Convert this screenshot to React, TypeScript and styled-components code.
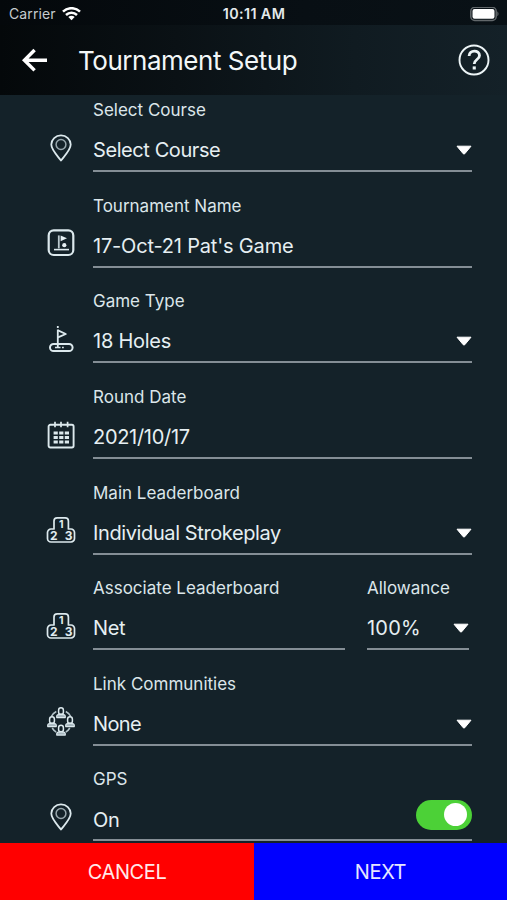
import React from "react";
import styled, { createGlobalStyle } from "styled-components";

const GlobalStyle = createGlobalStyle`
  * { box-sizing: border-box; }
  body { margin: 0; background: #142229; }
  button { border: 0; padding: 0; background: none; color: inherit; font: inherit; }
`;

const Screen = styled.div`
  display: flex;
  flex-direction: column;
  width: 507px;
  height: 900px;
  overflow: hidden;
  background: #142229;
  color: #eaf1f3;
  font-family: Inter, "Liberation Sans", sans-serif;
`;

const StatusBar = styled.div`
  display: grid;
  grid-template-columns: 1fr auto 1fr;
  align-items: center;
  flex: none;
  height: 25px;
  padding: 3px 8px 0 9px;
  background: linear-gradient(90deg, #04080b, #080f14 60%, #091116);
  font-size: 14px;
  line-height: 22px;
`;

const Carrier = styled.div`
  display: flex;
  align-items: center;
  gap: 6px;
  color: #c6cccf;
  letter-spacing: 0.1px;
`;

const Clock = styled.div`
  font-weight: 600;
  font-size: 14.3px;
  letter-spacing: 0.4px;
  color: #e4e9eb;
`;

const BatterySlot = styled.div`
  display: flex;
  justify-content: flex-end;
`;

const Header = styled.header`
  display: flex;
  align-items: center;
  flex: none;
  height: 70px;
  padding: 0 17px 0 20px;
  background: linear-gradient(90deg, #04080a, #0a1115 35%, #101b21 70%, #142128);
`;

const Title = styled.h1`
  flex: 1;
  margin: 2px 0 0 28px;
  font-size: 26px;
  font-weight: 400;
  line-height: 34px;
  letter-spacing: -0.47px;
  color: #f3f7f8;
`;

const IconButton = styled.button`
  display: flex;
`;

const Form = styled.main`
  flex: 1;
  min-height: 0;
  overflow: hidden;
  padding: 3px 35px 0 93px;
`;

const Row = styled.div`
  display: flex;
  gap: 22px;
  height: 95.65px;
  padding-right: ${(p: { $inset?: number }) => p.$inset ?? 0}px;
`;

const Field = styled.div<{ $width?: number }>`
  flex: ${(p) => (p.$width ? `none` : 1)};
  width: ${(p) => (p.$width ? `${p.$width}px` : "auto")};
`;

const Label = styled.div`
  height: 24px;
  font-size: 17px;
  line-height: 24px;
  color: #dce6ea;
  white-space: nowrap;
`;

const Value = styled.div<{ $icon?: boolean }>`
  display: flex;
  align-items: center;
  height: 49px;
  margin-left: ${(p) => (p.$icon ? "-46px" : "0")};
  padding-top: 7.4px;
`;

const IconCell = styled.span`
  display: flex;
  width: 28px;
  margin: -5px 18px 0 0;
`;

const Text = styled.span<{ $spacing: number }>`
  flex: 1;
  font-size: 20px;
  line-height: 28px;
  letter-spacing: ${(p) => p.$spacing}px;
  white-space: nowrap;
  color: #e6eff2;
`;

const Underline = styled.div`
  height: 2px;
  margin-top: -1px;
  background: #848e95;
`;

const Toggle = styled.span`
  display: flex;
  justify-content: flex-end;
  align-items: center;
  width: 56px;
  height: 30px;
  margin-top: -10px;
  padding: 0 5px;
  border-radius: 15px;
  background: #4cd137;
`;

const Knob = styled.span`
  width: 23px;
  height: 23px;
  border-radius: 50%;
  background: #fff;
`;

const Footer = styled.footer`
  display: grid;
  grid-template-columns: 254px 253px;
  flex: none;
  height: 57px;
`;

const Action = styled.button<{ $color: string; $ink: string }>`
  background: ${(p) => p.$color};
  color: ${(p) => p.$ink};
  font-size: 20px;
  letter-spacing: -0.4px;
`;

type IconName = "pin" | "flag" | "hole" | "calendar" | "podium" | "people";

const Person = ({ x, y }: { x: number; y: number }) => (
  <g transform={`translate(${x} ${y})`} fill="none" stroke="#dce9ed">
    <path d="M-2.4-.8v-2a2.4 2.4 0 0 1 4.8 0v2c0 1.2-1 2.1-2.4 2.1S-2.4.4-2.4-.8z" strokeWidth="1.5" />
    <path d="M-4.3 4.6V3.2c0-1.4 2.1-1.8 4.3-1.8s4.3.4 4.3 1.8v1.4z" fill="#a7b7be" strokeWidth="1.1" />
  </g>
);

const icons: Record<IconName, React.ReactNode> = {
  pin: (
    <>
      <path d="M14 26.5C11 22.5 4.3 16 4.3 10.6a9.7 9.2 0 0 1 19.4 0C23.7 16 17 22.5 14 26.5z" strokeWidth="1.8" />
      <circle cx="14" cy="10.5" r="4.9" stroke="#98a7ad" strokeWidth="1.5" />
    </>
  ),
  flag: (
    <>
      <rect x="1.7" y="1.4" width="24.6" height="24.6" rx="5" strokeWidth="2.2" />
      <path d="M11.8 6.4v13" strokeWidth="1.8" stroke="#bac9ce" />
      <path d="M13.6 6.4l6.4 2.8-6.4 3z" fill="#e6f0f3" stroke="none" />
      <circle cx="17.3" cy="16.2" r="2.1" fill="#e6f0f3" stroke="none" />
      <path d="M7 20.6h15" strokeWidth="1.6" />
    </>
  ),
  hole: (
    <>
      <rect x="3" y="18.9" width="22.6" height="7.2" rx="3.6" strokeWidth="2" />
      <path d="M10.8 1v2M10.8 4.6v17.6" strokeWidth="1.8" />
      <path d="M11 5.4l7.8 3.6-7.8 3.4" strokeWidth="1.8" />
      <path d="M8 22.5h5.5M15 22.5h1.8" strokeWidth="1.7" />
    </>
  ),
  calendar: (
    <>
      <rect x="1.6" y="3.8" width="25" height="22.7" rx="1.7" strokeWidth="1.9" />
      <path d="M8 .8v5.5M14 .8v5.5M20.6 .8v5.5" strokeWidth="1.7" />
      <path d="M6.6 12h15.6M6.6 16.5h15.6M6.6 21h15.6" strokeWidth="3" strokeDasharray="4.2 1.4" />
    </>
  ),
  podium: (
    <>
      <path d="M7 13V5a3.2 3.2 0 0 1 3.2-3.2h8A3.2 3.2 0 0 1 21.4 5v8H24a3.5 3.5 0 0 1 3.5 3.5v6A3.5 3.5 0 0 1 24 26H4a3.5 3.5 0 0 1-3.5-3.5v-6A3.5 3.5 0 0 1 4 13z" strokeWidth="1.7" />
      <g fill="#e1ecef" stroke="none" fontFamily="Inter, sans-serif" fontWeight="700" fontSize="10.5" textAnchor="middle">
        <text x="14.2" y="12">1</text>
        <text x="6.8" y="24" fontSize="12">2</text>
        <text x="21.6" y="24" fontSize="12">3</text>
      </g>
    </>
  ),
  people: (
    <>
      <path d="M9.3 3.5a11.5 11.5 0 0 0-5 5M18.8 3.5a11.5 11.5 0 0 1 5 5M5.2 20a11 11 0 0 0 4 4M22.8 20a11 11 0 0 1-4 4" stroke="#b4c4ca" strokeWidth="1.5" />
      <Person x={14} y={5} />
      <Person x={5} y={14} />
      <Person x={23} y={14} />
      <Person x={14} y={22.5} />
    </>
  ),
};

const RowIcon = ({ name }: { name: IconName }) => (
  <IconCell>
    <svg width="28" height="28" viewBox="0 0 28 28" fill="none" stroke="#dce9ed" strokeLinejoin="round" overflow="visible">
      {icons[name]}
    </svg>
  </IconCell>
);

const Caret = () => (
  <svg width="16" height="10" viewBox="0 0 16 10">
    <path d="M1 1.2h14L8.8 8.7q-.8.8-1.6 0z" fill="#fff" stroke="#fff" strokeLinejoin="round" />
  </svg>
);

interface EntryProps {
  label: string;
  value: string;
  icon?: IconName;
  caret?: boolean;
  toggle?: boolean;
  width?: number;
  spacing?: number;
}

const Entry = ({ label, value, icon, caret, toggle, width, spacing = -0.4 }: EntryProps) => (
  <Field $width={width}>
    <Label>{label}</Label>
    <Value $icon={!!icon}>
      {icon && <RowIcon name={icon} />}
      <Text $spacing={spacing}>{value}</Text>
      {caret && <Caret />}
      {toggle && (
        <Toggle role="switch" aria-checked="true">
          <Knob />
        </Toggle>
      )}
    </Value>
    <Underline />
  </Field>
);

export default function App() {
  return (
    <Screen>
      <GlobalStyle />
      <StatusBar>
        <Carrier>
          Carrier
          <svg width="19" height="14" viewBox="0 0 19 14" fill="none" stroke="#fff" strokeWidth="2.5">
            <path d="M1 4.7C5.7 0 13.3 0 18 4.7M4 8c3.1-3 7.9-3 11 0" />
            <path d="M9.5 13.2L6.3 10c1.8-1.7 4.6-1.7 6.4 0z" fill="#fff" stroke="none" />
          </svg>
        </Carrier>
        <Clock>10:11 AM</Clock>
        <BatterySlot>
          <svg width="29" height="15" viewBox="0 0 29 15">
            <rect x=".8" y=".3" width="25.4" height="13.2" rx="4" fill="none" stroke="#62686b" strokeWidth="1.5" />
            <rect x="2.5" y="2" width="22" height="9.8" rx="2" fill="#fff" />
            <path d="M27.3 4.6c1.6.7 1.6 4 0 4.7z" fill="#62686b" />
          </svg>
        </BatterySlot>
      </StatusBar>
      <Header>
        <IconButton aria-label="Back">
          <svg width="30" height="28" viewBox="0 0 30 28" fill="none" stroke="#fff" strokeWidth="3.4">
            <path d="M27 14.2H4.2M14.6 4L4.4 14.2l10.2 10.2" />
          </svg>
        </IconButton>
        <Title>Tournament Setup</Title>
        <IconButton aria-label="Help">
          <svg width="32" height="32" viewBox="0 0 32 32" fill="none" stroke="#edf5f7">
            <circle cx="16" cy="16" r="14.5" strokeWidth="1.9" />
            <path d="M11.1 12c0-6.3 10.4-6.3 10.4-.6 0 4.2-5.3 4-5.3 8.6" strokeWidth="2.8" />
            <path d="M14.7 22.4h3.1v3.1h-3.1z" fill="#edf5f7" stroke="none" />
          </svg>
        </IconButton>
      </Header>
      <Form>
        <Row>
          <Entry label="Select Course" value="Select Course" icon="pin" caret spacing={-0.42} />
        </Row>
        <Row>
          <Entry label="Tournament Name" value="17-Oct-21 Pat's Game" icon="flag" spacing={-0.18} />
        </Row>
        <Row>
          <Entry label="Game Type" value="18 Holes" icon="hole" caret spacing={-0.25} />
        </Row>
        <Row>
          <Entry label="Round Date" value="2021/10/17" icon="calendar" spacing={-0.3} />
        </Row>
        <Row>
          <Entry label="Main Leaderboard" value="Individual Strokeplay" icon="podium" caret spacing={-0.39} />
        </Row>
        <Row $inset={3}>
          <Entry label="Associate Leaderboard" value="Net" icon="podium" />
          <Entry label="Allowance" value="100%" caret width={102} spacing={0.2} />
        </Row>
        <Row>
          <Entry label="Link Communities" value="None" icon="people" caret spacing={-0.6} />
        </Row>
        <Row>
          <Entry label="GPS" value="On" icon="pin" toggle />
        </Row>
      </Form>
      <Footer>
        <Action $color="#ff0000" $ink="#ffe9e9">CANCEL</Action>
        <Action $color="#0000ff" $ink="#e6e6ff">NEXT</Action>
      </Footer>
    </Screen>
  );
}
